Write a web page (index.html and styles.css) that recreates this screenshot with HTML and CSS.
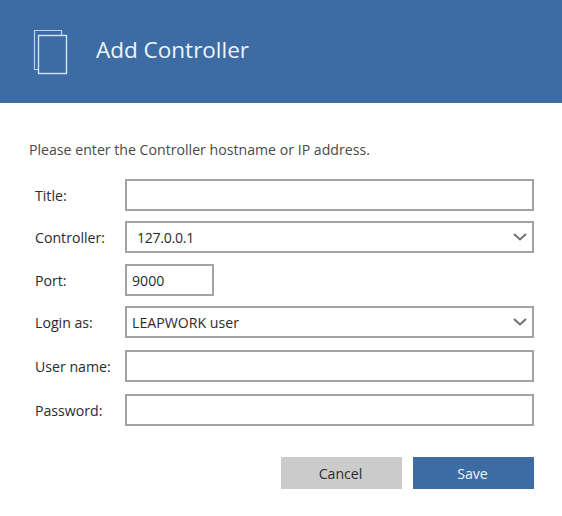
FILE: index.html
```html
<!DOCTYPE html>
<html lang="en">
<head>
<meta charset="utf-8">
<title>Add Controller</title>
<link rel="stylesheet" href="styles.css">
</head>
<body>
<div class="dialog">
  <header class="header">
    <svg class="logo" width="36" height="46" viewBox="0 0 36 46" fill="none" aria-hidden="true">
      <path d="M5 40.5H1.5V1.5H28.5V6" stroke="#b9d3f0" stroke-width="1.2"/>
      <rect x="5.5" y="6.5" width="28" height="38" stroke="#d3e4f7" stroke-width="1.4"/>
    </svg>
    <h1 class="title">Add Controller</h1>
  </header>
  <main class="body">
    <p class="intro">Please enter the Controller hostname or IP address.</p>
    <form class="form">
      <label class="label">Title:</label>
      <div class="field"></div>
      <label class="label">Controller:</label>
      <div class="field select indent"><span class="digits">127.0.0.1</span>
        <svg class="chevron" width="14" height="8" viewBox="0 0 14 8" fill="none"><path d="M1 1L7 6.5L13 1" stroke="#6f6f6f" stroke-width="2"/></svg>
      </div>
      <label class="label">Port:</label>
      <div class="field port">9000</div>
      <label class="label">Login as:</label>
      <div class="field select">LEAPWORK user
        <svg class="chevron" width="14" height="8" viewBox="0 0 14 8" fill="none"><path d="M1 1L7 6.5L13 1" stroke="#6f6f6f" stroke-width="2"/></svg>
      </div>
      <label class="label">User name:</label>
      <div class="field"></div>
      <label class="label">Password:</label>
      <div class="field"></div>
    </form>
    <div class="actions">
      <button type="button" class="btn cancel">Cancel</button>
      <button type="button" class="btn save">Save</button>
    </div>
  </main>
</div>
</body>
</html>
```
FILE: styles.css
```css
* { box-sizing: border-box; }
html, body { margin: 0; padding: 0; background: #fff; }
body { font-family: "Open Sans", "Noto Sans", sans-serif; color: #333; width: 562px; height: 516px; overflow: hidden; }
.header { height: 103px; background: #3c6ca3; display: flex; align-items: center; padding-left: 33px; padding-bottom: 4px; }
.logo { display: block; margin-right: 27px; margin-top: 5px; }
.title { margin: 0; font-size: 22.5px; font-weight: 400; color: #eef4fb; line-height: 30px; }
.body { padding: 37px 28px 0 29px; }
.intro { margin: 0 0 19px; font-size: 14.15px; line-height: 20px; color: #4a4a4a; }
.form { display: grid; grid-template-columns: 96px 1fr; grid-template-rows: 42px 43px 42px 44px 44px 32px; }
.label { font-size: 14.15px; padding-left: 6px; display: flex; align-items: center; height: 32px; color: #2b2b2b; }
.field { height: 32px; border: 2px solid #a3a3a3; background: #fff; font-size: 14.15px; display: flex; align-items: center; padding-left: 5px; color: #2b2b2b; position: relative; }
.select { justify-content: space-between; padding-right: 5px; }
.indent { padding-left: 10px; }
.digits { letter-spacing: -0.3px; }
.port { width: 89px; }
.actions { display: flex; justify-content: flex-end; gap: 11px; margin-top: 31px; }
.btn { width: 121px; height: 32px; border: 0; font: inherit; font-size: 14.15px; padding: 0 2px 0 0; }
.cancel { background: #cbcbcb; color: #2b2b2b; }
.save { background: #3c6ca3; color: #eef4fb; }
```
